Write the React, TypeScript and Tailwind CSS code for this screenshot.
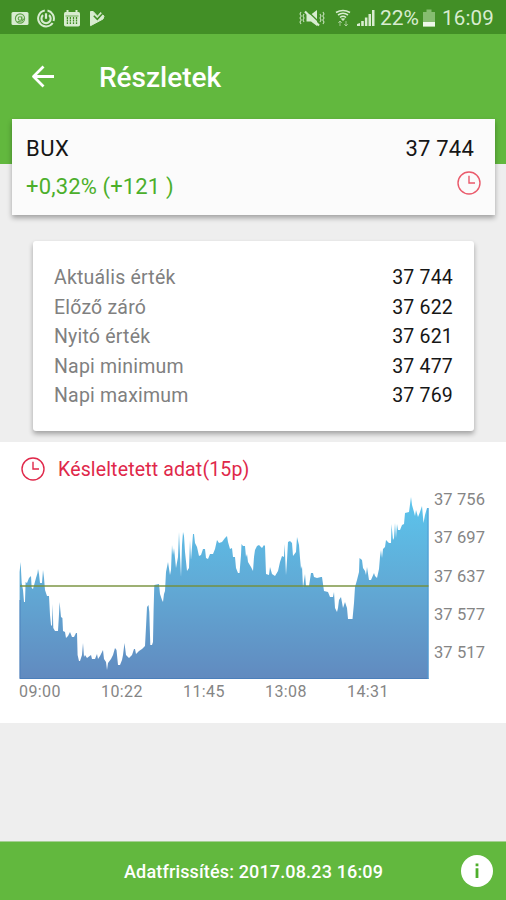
import React from 'react';

interface DetailRow {
    label: string;
    value: string;
}

const details: DetailRow[] = [
    { label: 'Aktuális érték', value: '37 744' },
    { label: 'Előző záró', value: '37 622' },
    { label: 'Nyitó érték', value: '37 621' },
    { label: 'Napi minimum', value: '37 477' },
    { label: 'Napi maximum', value: '37 769' },
];

const timeLabels = ['09:00', '10:22', '11:45', '13:08', '14:31'];
const valueLabels = ['37 756', '37 697', '37 637', '37 577', '37 517'];

// outline of the price curve, the viewBox starts at 19,490
const curve =
    '19.6,572 20.6,562 21.7,583 23,590 24,602 25,602 25.6,582 27,583 29,578 31,576 31.7,588 33,589 36,578 37.5,573 38,569 39,574 40,583 42,583 43,570 44,578 45,590 47,596 49,596 50,615 51,625 52,626 52.6,604 53.3,628 55,631 58,631 59,614 59.6,602 61,617 62.4,618 63,631 65,632 66,638 68,636 70,632 72,637 74,637 76,633 77,633 77.6,655 79,661 80,661 82,655 83,643 84,657 85,655 87,658 91,655 92,659 95,659 97,654 98,659 100,656 103,650 104,659 106,662 107,670 108,663 111,659 113,655 115,648 116.5,650 118,665 120,665 122,660 123,655 124.5,643 126,655 129,658 132,655 134,649 135,649 136,654 139,651 142,649 145,646 146,627 147,607 148.5,605 149.3,612 150.3,645 152,645 153,642 153.6,610 154.3,585 159,584 160,594 162,600 163,602 164,594 165,591 166,572 167,567 ' +
    '168,562 170,575 171,570 172,545 173,555 174,548 176,568 178,557 179,532 180,555 181,577 182,545 183,532 184,536 185,552 187,571 189,568 190,540 191,560 193,534 194,534 195,543 197,547 199,556 201,555 203,549 205,549 206,558 208,559 210,554 213,554 215,549 217,540 219,543 222,542 225,538 227,536 228,542 230,549 232,548 233,557 235,557 236,568 238,573 239.5,573 241,555 241.5,544 243,546 245,546 246,557 247,554 248,562 251,567 253,571 254,557 255,550 257,546 259,545 262,548 264,545 265,546 266,574 269,575 270,567 272,574 275,576 278,571 280,562 282,556 284,557 284.6,544 286,575 287,560 288,542 290,541 292,543 293,556 296,552 297,537 299,545 300,558 301,569 302,566 303,588 305,574 306,586 309,586 311,573 313,573 314,577 317,578 321,577 ' +
    '322,577 324,591 328,592 330,597 333,597 334,592 335,608 337,612 338,608 339,600 341,597 343,608 345,602 347,608 348,619 352.5,619 354,603 355,587 357,580 359,572 359.5,558 362,560 363,568 365,571 366,575 367,567 369,580 371,580 374,573 375,576 377,578 379,569 380,557 381,550 382,558 383,549 385,547 386,540 389,543 391,543 391.5,524 392.3,533 393,540 394,538 395,523 396,538 397,524 398,530 400,530 402,525 404,524 405,513 409,512 411,497 412,505 414,512 415,516 416,510 418,517 420,512 422,506 423.5,523 425,515 427,508 428.5,508';

const ClockIcon: React.FC<{ className?: string }> = ({ className }) => (
    <svg viewBox="0 0 24 24" className={className} fill="none" stroke="currentColor" strokeWidth="1.4">
        <circle cx="12" cy="12" r="11" />
        <path d="M12 4.8V12h6" />
    </svg>
);

const StatusBar = () => (
    <div className="h-[34px] bg-[#428f26] flex items-center pl-[11px] pr-[12px] pt-0.5 text-[#d8ecd0]">
        <div className="flex items-center gap-[8px]">
            <svg width="18" height="15" viewBox="0 0 18 15">
                <rect x="0.5" y="1" width="17" height="13" rx="1.5" fill="currentColor" />
                <g fill="none" stroke="#5fa247" strokeWidth="1.1">
                    <circle cx="9" cy="7.5" r="4.6" />
                    <circle cx="9" cy="7.5" r="1.8" />
                    <path d="M10.8 5.5v2.7c0 1.3 2 1 2-.7M6.4 10.7l5.6-1" />
                </g>
            </svg>
            <svg width="18" height="19" viewBox="0 0 18 19" fill="none" stroke="currentColor">
                <path d="M7.8 1.5A8 8 0 1 0 15.7 14M10.5 1.6A8 8 0 0 1 16.5 12" strokeWidth="2" />
                <path d="M6.1 6.1A4.6 4.6 0 1 0 12 6.1" strokeWidth="2.1" />
                <path d="M9 4.3v5.5" strokeWidth="2.2" />
            </svg>
            <svg width="18" height="19" viewBox="0 0 18 19">
                <path d="M1 4.5Q1 3 2.5 3h13Q17 3 17 4.5v11.2q0 1.8-1.8 1.8H2.8Q1 17.5 1 15.7Z" fill="currentColor" />
                <path d="M4.5 1v4M13.5 1v4" stroke="currentColor" strokeWidth="2" />
                <path d="M2.5 7h13" stroke="#428f26" strokeWidth="0.7" />
                <path d="M4.4 8v7M7.4 8v7M10.5 8v7M13.5 8v7" stroke="#428f26" strokeWidth="1.3" strokeDasharray="2 .6" />
            </svg>
            <svg width="17" height="17" viewBox="0 0 17 17">
                <path d="M1.5 1.5h2.7l4.3 4.7 3.2-3.7 3.3 3.7L14 9 1.5 15.7Z" fill="currentColor" stroke="currentColor" strokeLinejoin="round" />
                <path d="M4.8 5.8 8.3 9.3 13.8 3.3" fill="none" stroke="#428f26" strokeWidth="1.6" />
            </svg>
        </div>
        <div className="flex items-center ml-auto">
            <svg width="26" height="18" viewBox="0 0 26 18" fill="none" stroke="currentColor">
                <path d="M7.5 5.5H12l6-4.5v16L12 12.500H7.500Z" fill="currentColor" stroke="none" />
                <path d="M8 1.500 21.500 14.500" stroke="#428f26" strokeWidth="1.2" />
                <path d="M6 2.5 20 16.5" strokeWidth="2.2" />
                <path d="m2 3-1 2 1.2 2L1 9l1.2 2L1 13l1 2M5 5 4 7l1 2-1 2 1 2M24 3l1 2-1.2 2L25 9l-1.2 2 1.2 2-1 2M21 5l1 2-1 2 1 2-1 2" strokeWidth="1.1" opacity=".85" />
            </svg>
            <svg width="16" height="18" viewBox="0 0 16 18" className="ml-[10px]" fill="none" stroke="currentColor">
                <path d="M1 3.500q7-4 14 0M3 6q5-3.500 10 0M5 8.500q3-2.500 6 0" strokeWidth="1.6" />
                <path d="m6.300 9.700 1.700 2 1.700-2Z" fill="currentColor" strokeWidth="0.6" />
                <path d="M5 12v5M3.3 14 5 12l1.7 2M11 12v5M9.3 15l1.7 2 1.7-2" strokeWidth="1" opacity=".6" />
            </svg>
            <svg width="18" height="18" viewBox="0 0 18 18" className="ml-[6px]" fill="currentColor">
                <path d="M0 17v-2l3-1v3ZM4.2 12h2.6v5H4.2ZM7.9 8.5h2.5V17H7.9ZM11.5 5H14v12h-2.5ZM15 1h2.5v16H15Z" />
            </svg>
            <span className="ml-[5px] text-[21px] leading-none w-[39px] whitespace-nowrap tracking-[-0.1px]">22%</span>
            <svg width="12" height="18" viewBox="0 0 12 18" className="ml-[4px]">
                <path d="M3.5.5h5V3H12v14.5H0V3h3.5Z" fill="#86bd70" />
                <path d="M0 13h12v4.5H0Z" fill="#eef8e9" />
            </svg>
            <span className="ml-[7px] text-[20.5px] leading-none w-[52px] whitespace-nowrap tracking-[0.2px]">16:09</span>
        </div>
    </div>
);

const PriceChart = () => (
    <div className="flex pl-[19px] pt-[6px]">
        <div className="w-[410px]">
            <svg width="410" height="190" viewBox="19 490 410 190" className="block">
                <defs>
                    <linearGradient id="area" gradientUnits="userSpaceOnUse" x1="0" y1="497" x2="0" y2="679">
                        <stop offset="0" stopColor="#5bc5ed" />
                        <stop offset="0.5" stopColor="#61a9d5" />
                        <stop offset="1" stopColor="#618abf" />
                    </linearGradient>
                </defs>
                <polygon points={`19.6,679 ${curve} 428.5,679`} fill="url(#area)" />
                <path d="M20 600V678.5H428.5" fill="none" stroke="#467cb9" strokeOpacity="0.8" />
                <path d="M428 508V679" stroke="#4d9bd4" />
                <path d="M20 586H428.5" stroke="#738f38" strokeOpacity="0.7" strokeWidth="2" />
            </svg>
            <div className="flex text-[16px] leading-[24px] text-[#858585]">
                {timeLabels.map(t => (
                    <span key={t} className="w-[82px] shrink-0 tracking-[0.4px]">{t}</span>
                ))}
            </div>
        </div>
        <div className="flex flex-col justify-between h-[172px] pl-[5px] text-[16.5px] leading-[19px] tracking-[0.1px] text-[#858585] whitespace-nowrap">
            {valueLabels.map(v => (
                <span key={v}>{v}</span>
            ))}
        </div>
    </div>
);

export default function App() {
    return (
        <div className="w-[506px] h-[900px] overflow-hidden flex flex-col bg-[#eeeeee] font-['Roboto',sans-serif]">
            <StatusBar />
            <header className="h-[130px] shrink-0 bg-[#62b83e] pl-[31px] pt-[28px] flex items-start">
                <svg width="24" height="30" viewBox="0 0 24 30" fill="none" stroke="white" strokeWidth="2.8" strokeLinejoin="round">
                    <path d="M23 14.5H3M12.5 4.5l-10 10 10 10" />
                </svg>
                <h1 className="ml-[44px] text-[28px] leading-[31px] font-medium text-white">Részletek</h1>
            </header>

            <section className="-mt-[45px] ml-[12px] mr-[11px] h-[96px] shrink-0 bg-[#fbfbfb] shadow-[0_3px_5px_rgba(0,0,0,0.32)] pl-[14px] pr-[21px] pt-[15px] text-[22px] leading-[30px]">
                <div className="flex justify-between text-[#161616]">
                    <span className="tracking-[0.5px]">BUX</span>
                    <span className="tracking-[0.2px]">37 744</span>
                </div>
                <div className="flex justify-between pt-[8px] text-[#4caf2b]">
                    <span className="tracking-[0.15px]">+0,32% (+121 )</span>
                    <ClockIcon className="w-6 h-6 -mt-[1px] -mr-[7px] text-[#ea5a6b]" />
                </div>
            </section>

            <section className="mt-[26px] ml-[33px] mr-[32px] h-[190px] shrink-0 rounded-[3px] bg-white shadow-[0_3px_5px_rgba(0,0,0,0.32)] pl-[21px] pr-[21px] pt-[22px]">
                {details.map(row => (
                    <div key={row.label} className="flex justify-between h-[29.5px] leading-[29.5px] text-[19.5px] tracking-[0.2px]">
                        <span className="text-[#808080]">{row.label}</span>
                        <span className="text-[#161616]">{row.value}</span>
                    </div>
                ))}
            </section>

            <section className="mt-[11px] h-[281px] shrink-0 bg-white">
                <div className="flex items-center h-[42px] pl-[21px] pt-[13px] text-[#e0284a]">
                    <ClockIcon className="w-6 h-6 -mt-[2px]" />
                    <span className="ml-[13px] text-[19.5px] leading-[24px] tracking-[0.15px]">Késleltetett adat(15p)</span>
                </div>
                <PriceChart />
            </section>

            <footer className="mt-auto h-[59px] shrink-0 bg-[#62b83e] border-t border-[#a5cf92] flex items-center pl-[124px] pr-[13px] text-white">
                <span className="text-[18px] font-medium whitespace-nowrap tracking-[0.15px]">Adatfrissítés: 2017.08.23 16:09</span>
                <svg width="32" height="32" viewBox="0 0 32 32" className="ml-auto">
                    <circle cx="16" cy="16" r="16" fill="white" />
                    <path d="M14.6 8.5h2.8v2.8h-2.8ZM14.6 13.2h2.8v9.8h-2.8Z" fill="#4fae2c" />
                </svg>
            </footer>
        </div>
    );
}
